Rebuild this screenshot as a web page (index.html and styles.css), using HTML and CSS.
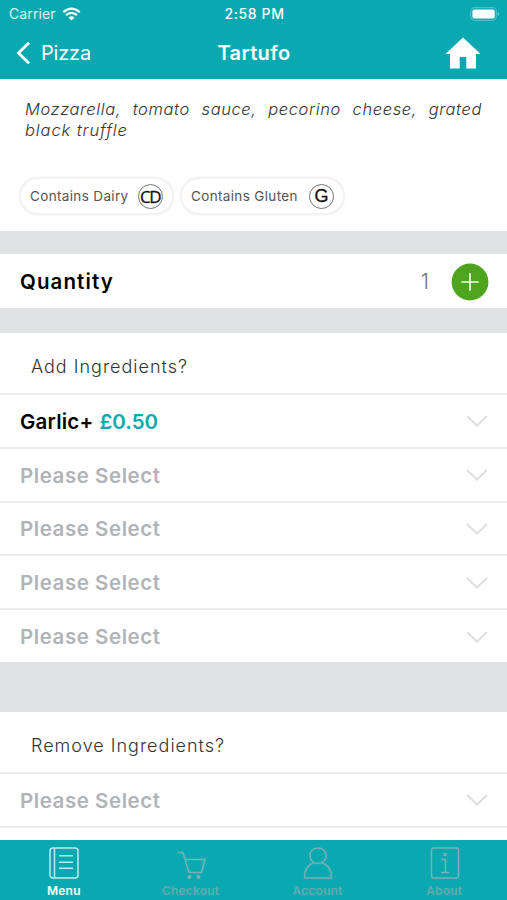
FILE: index.html
```html
<!DOCTYPE html>
<html lang="en">
<head>
<meta charset="utf-8">
<title>Tartufo</title>
<link rel="stylesheet" href="styles.css">
</head>
<body>
<svg class="defs" width="0" height="0"><symbol id="chevron" viewBox="0 0 24 14"><path d="M2 2l10 9.5L22 2" fill="none" stroke="#dedfe1" stroke-width="2"/></symbol></svg>
<div class="app">
  <header>
    <div class="status">
      <div class="carrier"><span>Carrier</span>
        <svg width="19" height="14" viewBox="0 0 18 14" fill="none" stroke="#fff" stroke-width="2.3"><path d="M.8 5.1q8.2-7 16.4 0M3.6 8.1q5.4-4.5 10.8 0"/><path d="M9 13.4l-3-3q3-2.4 6 0z" fill="#fff" stroke="none"/></svg>
      </div>
      <span class="time">2:58 PM</span>
      <svg class="battery" width="30" height="14" viewBox="0 0 30 14"><rect x=".7" y=".7" width="25.6" height="12.6" rx="3.8" fill="none" stroke="#4dbfc5" stroke-width="1.2"/><rect x="2.4" y="2.4" width="22.3" height="9.2" rx="2.2" fill="#fff"/><path d="M27.6 5v4q1.600-.5 1.600-2t-1.600-2" fill="#6bcbd0"/></svg>
    </div>
    <nav class="nav">
      <div class="back"><svg width="15" height="24" viewBox="0 0 15 24"><path d="M13 1.700L2.500 12 13 22.300" fill="none" stroke="#fff" stroke-width="2.800"/></svg><span>Pizza</span></div>
      <h1>Tartufo</h1>
      <svg class="home" width="36" height="32" viewBox="0 0 36 32"><path d="M18 .5L35.500 17H31v14.500h-9.700V20h-6.600v11.500H5V17H.5z" fill="#fff"/></svg>
    </nav>
  </header>
  <main>
    <section class="intro">
      <p><span class="line full">Mozzarella, tomato sauce, pecorino cheese, grated</span><span class="line last">black truffle</span></p>
      <div class="chips">
        <div class="chip dairy"><span>Contains Dairy</span><b class="cd">CD</b></div>
        <div class="chip gluten"><span>Contains Gluten</span><b>G</b></div>
      </div>
    </section>
    <section class="quantity"><h2>Quantity</h2>
      <span class="count">1</span>
      <svg width="38" height="38" viewBox="0 0 38 38"><circle cx="19" cy="19" r="18.400" fill="#4ca51c"/><path d="M10.300 19h17.400M19 10.300v17.400" stroke="#f0ffe8" stroke-width="1.700"/></svg>
    </section>
    <section class="group add">
      <h3>Add Ingredients?</h3>
      <div class="row chosen"><span>Garlic+</span><em>£0.50</em><svg><use href="#chevron"/></svg></div>
      <div class="row"><span>Please Select</span><svg><use href="#chevron"/></svg></div>
      <div class="row"><span>Please Select</span><svg><use href="#chevron"/></svg></div>
      <div class="row"><span>Please Select</span><svg><use href="#chevron"/></svg></div>
      <div class="row"><span>Please Select</span><svg><use href="#chevron"/></svg></div>
    </section>
    <section class="group remove">
      <h3>Remove Ingredients?</h3>
      <div class="row"><span>Please Select</span><svg><use href="#chevron"/></svg></div>
      <div class="row"></div>
    </section>
  </main>
  <footer>
    <div class="tab active"><svg width="32" height="34" viewBox="0 0 32 34"><rect x="2" y="2" width="28" height="30" rx="3"/><path d="M6.500 2v30M11 9.800h14M11 16.200h14M11 22.200h14"/></svg><span>Menu</span></div>
    <div class="tab"><svg width="32" height="34" viewBox="0 0 32 34"><path d="M2.500 6.500h5.500l6 20h13.500M10 13.500h20l-3.500 13"/><circle cx="14.500" cy="31" r="1.200" class="dot"/><circle cx="23.500" cy="31" r="1.200" class="dot"/></svg><span class="checkout">Checkout</span></div>
    <div class="tab"><svg width="32" height="34" viewBox="0 0 32 34"><ellipse cx="16" cy="9.800" rx="8.200" ry="7.800"/><path d="M12 16.700C6 18.500 2.500 23 2.500 32h27C29.500 23 26 18.500 20 16.700"/></svg><span class="account">Account</span></div>
    <div class="tab"><svg width="32" height="34" viewBox="0 0 32 34"><rect x="2.500" y="2" width="27" height="30" rx="2.500"/><path d="M12 13.500h4.500V26M12 26.500h8.500"/><circle cx="16" cy="8.500" r="1" class="dot"/></svg><span>About</span></div>
  </footer>
</div>
</body>
</html>
```
FILE: styles.css
```css
* { box-sizing: border-box; }
body { margin: 0; font-family: Inter, "Liberation Sans", sans-serif; background: #fff; }
.defs { display: block; }
h1, h2, h3, p { margin: 0; }
.app { width: 507px; height: 900px; display: flex; flex-direction: column; overflow: hidden; white-space: nowrap; }
header { height: 79px; flex: none; background: #0aa9b1; color: #fff; }
.status { height: 27px; display: grid; grid-template-columns: 1fr auto 1fr; align-items: center; padding: 0 7px 0 9px; font-size: 14px; }
.carrier { display: flex; align-items: center; gap: 6px; letter-spacing: .1px; color: #d9f3f4; }
.time { font-size: 14px; font-weight: 500; letter-spacing: .6px; }
.battery { justify-self: end; }
.nav { height: 51px; display: grid; grid-template-columns: 1fr auto 1fr; align-items: center; padding: 0 26px 0 16px; }
.back { display: flex; align-items: center; gap: 10px; font-size: 20px; letter-spacing: -.2px; }
.nav h1 { font-size: 20px; font-weight: 600; letter-spacing: .4px; margin-left: 11px; }
.home { justify-self: end; }
main { flex: 1; min-height: 0; overflow: hidden; background: #e1e2e4; }
.intro { height: 152px; background: #fff; padding: 20px 25px 0; }
.intro p { font-size: 16.500px; letter-spacing: .6px; font-style: italic; font-weight: 300; line-height: 21px; color: #333; }
.line { display: block; }
.full { text-align-last: justify; }
.last { letter-spacing: .9px; }
.chips { display: flex; gap: 6px; margin: 36px 0 0 -6px; }
.chip { height: 38px; border: 2px solid #f2f2f2; border-radius: 19px; display: flex; align-items: center; justify-content: space-between; padding: 0 9px; font-size: 13.500px; letter-spacing: .35px; color: #555; box-shadow: 0 0 2px #eee; }
.dairy { width: 155px; }
.gluten { width: 165px; }
.chip b { width: 25px; height: 25px; border: 1px solid #777; border-radius: 50%; display: flex; align-items: center; justify-content: center; font-family: "Liberation Sans", sans-serif; font-size: 18px; font-weight: 400; letter-spacing: 0; color: #111; -webkit-text-stroke: .3px #111; }
.chip .cd { font-family: "Open Sans", sans-serif; font-size: 17px; letter-spacing: -1.500px; padding-right: 1px; }
.quantity { height: 54px; margin: 23px 0 25px; background: #fff; display: flex; align-items: center; padding: 1px 18px 0 20px; }
.quantity h2 { flex: 1; font-size: 20.500px; font-weight: 600; letter-spacing: 1.100px; }
.count { margin-right: 22px; font-size: 21px; font-weight: 300; color: #777; }
.group { background: #fff; }
.group h3 { height: 60px; padding: 8px 31px 0; line-height: 52px; font-size: 18px; font-weight: 300; letter-spacing: 1px; color: #333; }
.row { height: 53.800px; border-top: 2px solid #ededee; padding: 1px 18px 0 20px; display: flex; align-items: center; font-size: 20.500px; font-weight: 600; letter-spacing: .55px; color: #b0b4b8; }
.row svg { width: 24px; height: 14px; margin-left: auto; }
.row em { font-style: normal; color: #0aa9b1; margin-left: 6px; letter-spacing: 0; }
.chosen { color: #000; letter-spacing: .2px; }
.remove { margin-top: 50px; }
footer { height: 60px; flex: none; background: #0aa9b1; display: grid; grid-template-columns: repeat(4, 1fr); }
.tab { display: flex; flex-direction: column; align-items: center; padding-top: 6px; color: #65aaae; font-size: 12px; font-weight: 600; line-height: 22px; letter-spacing: .2px; }
.tab svg { margin-left: 2px; fill: none; stroke: #78b2b5; stroke-width: 1.500; }
.tab span { margin-left: 1px; }
.tab .dot { fill: #78b2b5; }
.active { color: #fff; }
.active svg { stroke: #b8edef; }
```
